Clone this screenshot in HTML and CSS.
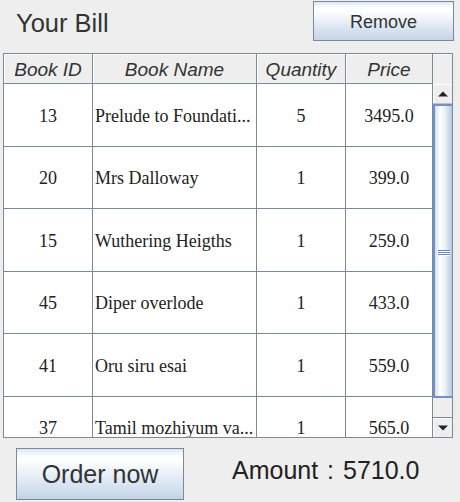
FILE: index.html
```html
<!DOCTYPE html>
<html>
<head>
<meta charset="utf-8">
<link rel="stylesheet" href="styles.css">
</head>
<body>
<div class="window">
  <div class="top">
    <div class="title">Your Bill</div>
    <button class="btn btn-remove">Remove</button>
  </div>
  <div class="pane">
    <div class="thead">
      <div class="th">Book ID</div>
      <div class="th">Book Name</div>
      <div class="th">Quantity</div>
      <div class="th">Price</div>
      <div class="corner"></div>
    </div>
    <div class="viewport">
      <div class="rows">
        <div class="row tall"><div class="td c">13</div><div class="td l">Prelude to Foundati...</div><div class="td c">5</div><div class="td c">3495.0</div></div>
        <div class="row"><div class="td c">20</div><div class="td l">Mrs Dalloway</div><div class="td c">1</div><div class="td c">399.0</div></div>
        <div class="row tall"><div class="td c">15</div><div class="td l">Wuthering Heigths</div><div class="td c">1</div><div class="td c">259.0</div></div>
        <div class="row"><div class="td c">45</div><div class="td l">Diper overlode</div><div class="td c">1</div><div class="td c">433.0</div></div>
        <div class="row tall"><div class="td c">41</div><div class="td l">Oru siru esai</div><div class="td c">1</div><div class="td c">559.0</div></div>
        <div class="row"><div class="td c">37</div><div class="td l">Tamil mozhiyum va...</div><div class="td c">1</div><div class="td c">565.0</div></div>
      </div>
      <div class="vscroll">
        <div class="sb-btn">
          <svg width="10" height="6" viewBox="0 0 10 6"><polygon points="0,5.5 10,5.5 5,0.5" fill="#222"/></svg>
        </div>
        <div class="thumb">
          <div class="grip"><span></span><span></span><span></span></div>
        </div>
        <div class="track"></div>
        <div class="sb-btn down">
          <svg width="10" height="6" viewBox="0 0 10 6"><polygon points="0,0.5 10,0.5 5,5.5" fill="#222"/></svg>
        </div>
      </div>
    </div>
  </div>
  <div class="bottom">
    <button class="btn btn-order">Order now</button>
    <div class="amount">Amount :&nbsp;5710.0</div>
  </div>
</div>
</body>
</html>
```

FILE: styles.css
```css
html, body {
  margin: 0;
  padding: 0;
}
body {
  background: #eeeeee;
  font-family: "Liberation Sans", Arial, sans-serif;
  color: #333333;
}
.window {
  width: 460px;
  height: 502px;
  overflow: hidden;
}
.top {
  display: flex;
  justify-content: space-between;
  align-items: flex-start;
  height: 53px;
  padding: 1px 6px 0 16px;
  box-sizing: border-box;
}
.title {
  font-size: 25.5px;
  line-height: 25px;
  margin-top: 10px;
  color: #333;
}
.btn {
  font-family: "Liberation Sans", Arial, sans-serif;
  color: #333;
  border: 1px solid #7a8a99;
  background: linear-gradient(to bottom, #dce7f3 0%, #fbfdff 14%, #ffffff 22%, #e5edf6 55%, #c3d4e8 100%);
  padding: 0;
  margin: 0;
  box-sizing: border-box;
  cursor: default;
}
.btn-remove {
  width: 141px;
  height: 40px;
  font-size: 18px;
  line-height: 18px;
  padding-top: 2px;
}
.pane {
  margin-left: 3px;
  width: 450px;
  height: 385px;
  border: 1px solid #7a8a99;
  box-sizing: border-box;
  background: #ffffff;
}
.thead {
  display: grid;
  grid-template-columns: 89px 164px 89px 87px 19px;
  height: 30px;
  background: #eeeeee;
}
.th {
  font-style: italic;
  font-size: 19px;
  line-height: 26px;
  padding-top: 3px;
  text-align: center;
  border-right: 1px solid #7a8a99;
  border-bottom: 1px solid #7a8a99;
  box-shadow: inset 1px 1px 0 #ffffff;
  box-sizing: border-box;
  color: #333;
  white-space: nowrap;
}
.corner {
  background: #eeeeee;
  box-shadow: inset 0 1px 0 #ffffff;
}
.viewport {
  display: flex;
  height: 353px;
  overflow: hidden;
}
.rows {
  width: 429px;
  height: 353px;
  overflow: hidden;
  flex: none;
}
.row {
  display: grid;
  grid-template-columns: 89px 164px 89px 87px;
  height: 62px;
  font-family: "Liberation Serif", "Times New Roman", serif;
  font-size: 18px;
  color: #222;
}
.row.tall {
  height: 63px;
}
.td {
  border-right: 1px solid #7a8a99;
  border-bottom: 1px solid #7a8a99;
  display: flex;
  align-items: center;
  white-space: nowrap;
  overflow: hidden;
  box-sizing: border-box;
  padding-top: 2px;
}
.td.c {
  justify-content: center;
}
.td.l {
  padding-left: 2px;
}
.vscroll {
  width: 19px;
  flex: none;
  display: flex;
  flex-direction: column;
  background: #eeeeee;
}
.sb-btn {
  height: 20px;
  flex: none;
  display: flex;
  align-items: center;
  justify-content: center;
  background: #eeeeee;
  box-shadow: inset 1px 1px 0 #ffffff;
  border-bottom: 1px solid #b9c2cc;
  box-sizing: border-box;
}
.sb-btn.down {
  border-bottom: none;
  border-top: 1px solid #7a8a99;
}
.thumb {
  height: 294px;
  flex: none;
  box-sizing: border-box;
  border-left: 2px solid #7490c6;
  border-top: 2px solid #7490c6;
  border-bottom: 2px solid #7490c6;
  background: linear-gradient(to right, #d2dfee 0%, #ffffff 30%, #eef3f9 55%, #c8d8eb 85%, #b4c9e3 100%);
  display: flex;
  align-items: center;
  justify-content: center;
}
.grip {
  display: flex;
  flex-direction: column;
  gap: 1px;
  width: 12px;
  margin-top: 2px;
}
.grip span {
  display: block;
  height: 1px;
  background: #6a86bc;
  box-shadow: 0 1px 0 #ffffff;
}
.track {
  height: 19px;
  flex: none;
  background: #eeeeee;
}
.bottom {
  display: flex;
  align-items: flex-start;
  padding: 10px 0 0 16px;
}
.btn-order {
  width: 168px;
  height: 52px;
  font-size: 25px;
  line-height: 25px;
}
.amount {
  margin-left: 48px;
  margin-top: 10px;
  font-size: 25px;
  line-height: 25px;
  color: #222;
  word-spacing: 2px;
}
```
